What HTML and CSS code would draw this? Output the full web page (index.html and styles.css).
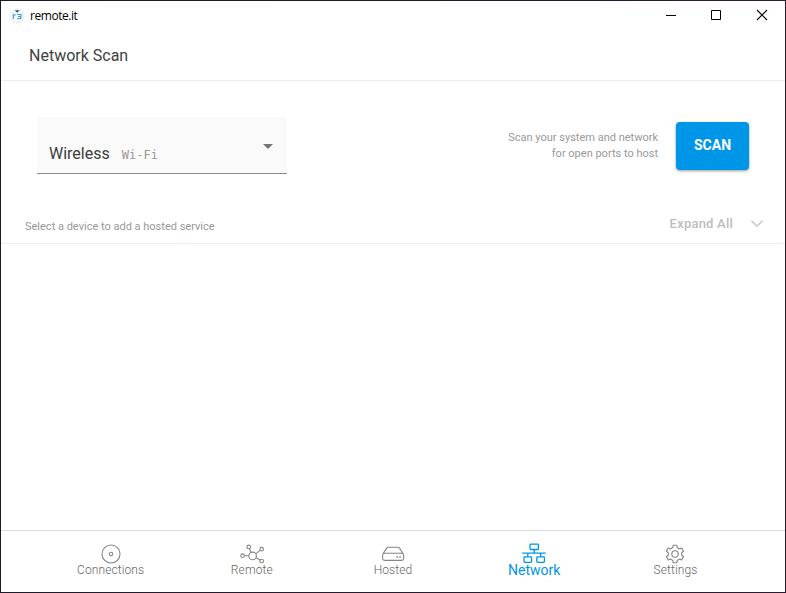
FILE: index.html
```html
<!DOCTYPE html>
<html lang="en">
<head>
<meta charset="utf-8">
<title>remote.it</title>
<link rel="stylesheet" href="styles.css">
</head>
<body>
<div class="window">
  <div class="titlebar">
    <svg class="app-icon" width="16" height="16" viewBox="0 0 16 16" fill="none">
      <circle cx="8" cy="8" r="7" fill="#f8f8f8" stroke="#dcdcdc" stroke-width=".8" stroke-dasharray="2 1.5"/>
      <path d="M5.8 2.2l2.4 2.6 2.4-2.6z" fill="#2045a8"/>
      <path d="M4.3 11V6.2M4.3 7.7q.5-1 2.5-1M8.2 6.5h3.7v4H8.2M9 8.5h3" stroke="#26a0e0" stroke-width="1.1"/>
    </svg>
    <span class="app-name">remote.it</span>
    <div class="controls">
      <svg width="46" height="29" viewBox="0 0 46 29"><path d="M18 14.5h10" stroke="#000"/></svg>
      <svg width="46" height="29" viewBox="0 0 46 29"><path d="M17.5 9.5h9v9h-9z" fill="none" stroke="#000"/></svg>
      <svg width="46" height="29" viewBox="0 0 46 29"><path d="M17 9l10 10M27 9L17 19" stroke="#000" stroke-width="1.1"/></svg>
    </div>
  </div>
  <header class="header">Network Scan</header>
  <section class="scan">
    <div class="select">
      <span class="value">Wireless</span><span class="kind">Wi-Fi</span>
      <svg class="caret" width="10" height="5" viewBox="0 0 10 5"><path d="M0 0h10L5 5z" fill="#757575"/></svg>
    </div>
    <p class="hint">Scan your system and network<br>for open ports to host</p>
    <button class="scan-button">SCAN</button>
  </section>
  <div class="list-header">
    <span class="caption">Select a device to add a hosted service</span>
    <span class="expand">Expand All</span>
    <svg class="chevron" width="12" height="7" viewBox="0 0 12 7"><path d="M.5.7L6 6.1 11.5.7" fill="none" stroke="#bdbdbd" stroke-width="1.2"/></svg>
  </div>
  <main class="devices"></main>
  <nav class="nav">
    <a class="tab">
      <svg width="26" height="20" viewBox="0 0 26 20"><circle cx="13" cy="10" r="9"/><circle cx="13" cy="10" r="1.7"/></svg>
      <span>Connections</span>
    </a>
    <a class="tab">
      <svg width="26" height="20" viewBox="0 0 26 20"><circle cx="13.6" cy="11.9" r="3.8"/><circle cx="9.7" cy="2.9" r="1.8"/><circle cx="22.7" cy="5.2" r="1.8"/><circle cx="3.6" cy="11.7" r="1.8"/><circle cx="22.7" cy="17" r="1.8"/><path d="M10.5 4.7l1.5 3.6M21.1 6.4l-4.2 3.2M5.5 11.7h4.2M21.1 16l-4-2.2"/></svg>
      <span>Remote</span>
    </a>
    <a class="tab">
      <svg width="26" height="20" viewBox="0 0 26 20"><path d="M2.7 10.2l4-6.1q.6-.9 1.7-.9h9.4q1.1 0 1.7.9l4 6.1M4.5 9.3h17.2q1.9 0 1.9 1.9v3.3q0 1.9-1.9 1.9H4.5q-1.9 0-1.9-1.9v-3.3q0-1.9 1.9-1.9z"/><path d="M16.4 12.9h1.6M19.3 12.9h1.6" stroke-width="1.5"/></svg>
      <span>Hosted</span>
    </a>
    <a class="tab active">
      <svg width="26" height="20" viewBox="0 0 26 20"><rect x="9" y=".1" width="8.4" height="5.4" rx=".8"/><rect x="3" y="12.9" width="7.6" height="5.4" rx=".8"/><rect x="15.8" y="12.9" width="7.6" height="5.4" rx=".8"/><path d="M13.2 5.5v3.7M1.2 9.2h23.6M6.8 9.2v3.7M19.6 9.2v3.7"/></svg>
      <span>Network</span>
    </a>
    <a class="tab">
      <svg width="26" height="20" viewBox="-13 -10 26 20"><path stroke-linejoin="round" d="M-2.2-6.4L-1.9-8.8H1.9L2.2-6.4 4.44-5.1 6.67-6.05 8.57-2.75 6.64-1.3V1.3L8.57 2.75 6.67 6.05 4.44 5.1 2.2 6.4 1.9 8.8H-1.9L-2.2 6.4-4.44 5.1-6.67 6.05-8.57 2.75-6.64 1.3V-1.3L-8.57-2.75-6.67-6.05-4.44-5.1z"/><circle r="3.2"/></svg>
      <span>Settings</span>
    </a>
  </nav>
</div>
</body>
</html>
```
FILE: styles.css
```css
* { box-sizing: border-box; }
body { margin: 0; font-family: Roboto, sans-serif; background: #fff; }
.window {
  width: 786px; height: 593px;
  display: flex; flex-direction: column;
  border: 1px solid #231a2c;
  border-image: linear-gradient(90deg, #1d1a2c, #2c1b30) 1;
}
.titlebar { height: 29px; flex: none; display: flex; align-items: center; padding-left: 8px; }
.app-name { font: 12px "Open Sans", sans-serif; letter-spacing: -.45px; color: #000; margin-left: 5px; }
.controls { display: flex; margin-left: auto; margin-right: -1px; }
.header {
  height: 51px; flex: none; padding-left: 28px;
  font-size: 16px; line-height: 52px; color: #424242;
  border-bottom: 1px solid #eee;
}
.scan { height: 124px; flex: none; display: flex; align-items: flex-start; padding: 36px 36px 0; }
.select {
  width: 250px; height: 57px; padding: 27px 14px 0 12px;
  display: flex; align-items: baseline;
  background: #fafafa; border-bottom: 1px solid #8c8c8c; border-radius: 4px 4px 0 0;
}
.value { font-size: 16px; line-height: 19px; color: #3c3c3c; }
.kind { margin-left: 12px; font: 12px "DejaVu Sans Mono", monospace; color: #999; }
.caret { margin-left: auto; align-self: flex-start; }
.hint { margin: 13px 18px 0 auto; font-size: 11px; line-height: 16px; text-align: right; color: #999; }
.scan-button {
  width: 73px; height: 48px; margin-top: 5px; padding: 0 0 2px;
  border: 0; border-radius: 4px; background: #0096e7; color: #fff;
  font: 700 14px Roboto, sans-serif;
  box-shadow: 0 1px 3px rgba(0, 0, 0, .4);
}
.list-header {
  height: 39px; flex: none; display: flex; align-items: flex-start;
  padding: 9px 22px 0 24px; border-bottom: 1px solid #eee;
}
.caption { font-size: 11px; line-height: 13px; margin-top: 6px; color: #999; }
.expand { margin-left: auto; font-size: 13px; line-height: 19px; font-weight: 500; letter-spacing: .22px; color: #bdbdbd; }
.chevron { margin: 6px 0 0 18px; }
.devices { flex: 1; }
.nav { height: 62px; flex: none; display: flex; padding: 13px 39px 0; border-top: 1px solid #d9d9d9; }
.tab {
  flex: 1; display: flex; flex-direction: column; align-items: center;
  font-size: 12px; line-height: 14px; font-weight: 300; letter-spacing: .1px; color: #666;
}
.tab span { margin-top: -1px; }
.tab svg { fill: none; stroke: #858585; stroke-width: 1.1; flex: none; overflow: visible; }
.tab.active { font-size: 14px; line-height: 16px; font-weight: 400; letter-spacing: 0; color: #0096e7; }
.tab.active span { margin-top: -2px; }
.tab.active svg { stroke: #0096e7; stroke-width: 1.3; }
```
